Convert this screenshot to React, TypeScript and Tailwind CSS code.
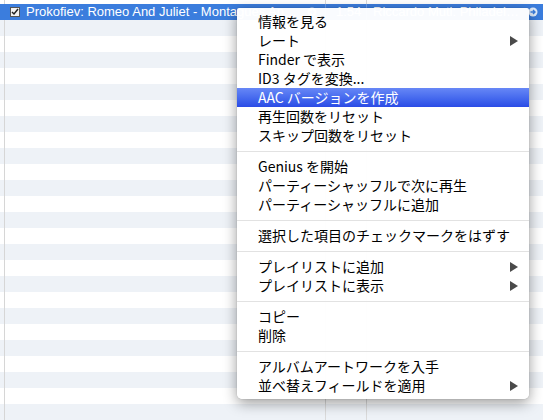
type Item = { label?: string; sub?: boolean; active?: boolean; sep?: boolean };

const menu: Item[] = [
  { label: "情報を見る" },
  { label: "レート", sub: true },
  { label: "Finder で表示" },
  { label: "ID3 タグを変換..." },
  { label: "AAC バージョンを作成", active: true },
  { label: "再生回数をリセット" },
  { label: "スキップ回数をリセット" },
  { sep: true },
  { label: "Genius を開始" },
  { label: "パーティーシャッフルで次に再生" },
  { label: "パーティーシャッフルに追加" },
  { sep: true },
  { label: "選択した項目のチェックマークをはずす" },
  { sep: true },
  { label: "プレイリストに追加", sub: true },
  { label: "プレイリストに表示", sub: true },
  { sep: true },
  { label: "コピー" },
  { label: "削除" },
  { sep: true },
  { label: "アルバムアートワークを入手" },
  { label: "並べ替えフィールドを適用", sub: true },
];

function Row({ h, bg, children }: { h: string; bg: string; children?: React.ReactNode }) {
  return (
    <div className={`flex shrink-0 ${h} ${bg}`}>
      <div className="w-[5px] border-r border-[#d6d6d6]" />
      {children ?? (
        <>
          <div className="w-[321px] border-r border-[#dadada]" />
          <div className="w-[41px] border-r border-[#dadada]" />
          <div className="flex-1" />
        </>
      )}
    </div>
  );
}

function CircleArrow() {
  return (
    <svg width="10" height="10" viewBox="0 0 10 10">
      <circle cx="5" cy="5" r="4.5" fill="#ffffff" fillOpacity="0.85" />
      <path d="M2.5 5h4M5 3l2 2-2 2" stroke="#3b7ddd" strokeWidth="1.4" fill="none" />
    </svg>
  );
}

export default function App() {
  const rows = Array.from({ length: 25 }, (_, i) => i);
  return (
    <div className="relative w-[543px] h-[420px] overflow-hidden bg-white font-['Liberation_Sans',sans-serif]">
      <div className="flex flex-col">
        <Row h="h-[4px]" bg="bg-white" />
        <div className="flex h-4 shrink-0 bg-[#3b7ddd] text-white text-[13px] leading-4">
          <div className="w-[5px]" />
          <div className="w-[321px] flex items-center border-r border-[#6a9be6] overflow-hidden whitespace-nowrap">
            <span className="ml-[5px] w-[10px] h-[10px] shrink-0 bg-[#f2f2f2] border border-[#555] flex items-center justify-center">
              <svg width="8" height="8" viewBox="0 0 8 8">
                <path d="M1 4l2 2 4-5" stroke="#222" strokeWidth="1.5" fill="none" />
              </svg>
            </span>
            <span className="ml-[6px] flex-1 truncate">Prokofiev: Romeo And Juliet - Montagues And Capulets</span>
            <span className="ml-[4px] mr-[8px] shrink-0">
              <CircleArrow />
            </span>
          </div>
          <div className="w-[41px] border-r border-[#6a9be6] flex items-center pl-[10px]">1:54</div>
          <div className="flex-1 flex items-center pl-[6px] overflow-hidden whitespace-nowrap">
            <span className="flex-1 truncate">Riccardo Muti: Philadelphia Orchestra</span>
            <span className="ml-[2px] mr-[5px] shrink-0">
              <CircleArrow />
            </span>
          </div>
        </div>
        {rows.map((i) => (
          <Row key={i} h="h-4" bg={i % 2 === 0 ? "bg-[#eef2f7]" : "bg-white"} />
        ))}
      </div>

      <div className="absolute left-[237px] top-[8px] w-[292px] pt-[4px] pb-[4px] bg-white/[0.97] rounded-b-[5px] rounded-t-[2px] shadow-[0_4px_14px_rgba(0,0,0,0.4),0_0_1px_rgba(0,0,0,0.35)] font-['Noto_Sans_CJK_JP',sans-serif] text-[14px] text-black">
        {menu.map((m, i) =>
          m.sep ? (
            <div key={i} className="h-[12px] flex items-center">
              <div className="h-px w-full bg-[#e2e2e2]" />
            </div>
          ) : (
            <div
              key={i}
              className={`h-[19px] leading-[19px] flex items-center pl-[21px] pr-[11px] ${
                m.active ? "bg-gradient-to-b from-[#6787f6] to-[#2b4be6] text-white" : ""
              }`}
            >
              <span className="flex-1 whitespace-nowrap">{m.label}</span>
              {m.sub && (
                <svg width="8" height="10" viewBox="0 0 8 10">
                  <path d="M0 0L8 5L0 10Z" fill="#4a4a4a" />
                </svg>
              )}
            </div>
          )
        )}
      </div>
    </div>
  );
}
